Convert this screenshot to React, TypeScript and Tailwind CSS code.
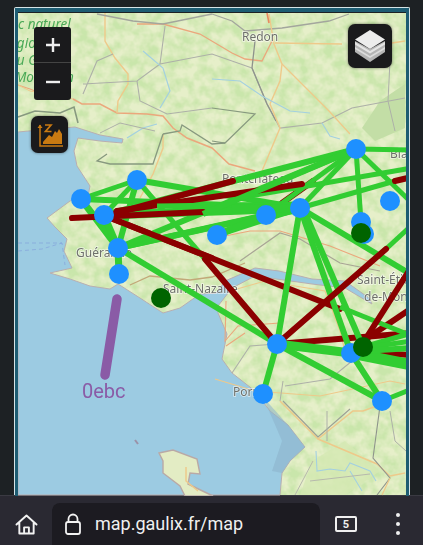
import React from 'react';

const ORANGE = '#eba77c';
const YELLOW = '#eec98a';
const GRAY = '#adb0a8';
const BORDER = '#87997f';
const RIVER = '#a3d0e0';

const roads: [string, string, number][] = [
  ['M73 98 L82 103 L100 103 L117 112 L147 113 L163 115 L173 127 L187 137 L212 147 L229 163 L255 170', ORANGE, 1.5],
  ['M105 12 L105 40 L115 57 L128 73 L128 83 L118 100 L117 112', YELLOW, 1.4],
  ['M18 84 L30 88 L40 92', ORANGE, 1.3],
  ['M18 84 L30 90 L73 98', YELLOW, 1],
  ['M137 23 L163 23 L200 33 L232 52 L245 58 L262 60 L272 40', ORANGE, 1.3],
  ['M163 133 L163 147 L153 173 L140 197', YELLOW, 1.4],
  ['M97 13 L133 20 L163 23 L212 13', '#a3a69d', 1.3],
  ['M212 13 L232 20 L245 30 L282 27 L329 20 L349 13', '#a3a69d', 1.3],
  ['M83 93 L97 60 L113 53 M83 83 L137 80 L160 63 L212 53 L252 67', GRAY, 1.1],
  ['M137 80 L140 100 L167 113 L212 107 M160 63 L165 25', GRAY, 1.1],
  ['M252 67 L267 103 L280 127 L322 122 L352 107 L405 97', GRAY, 1.2],
  ['M255 40 L252 67 L267 103 L276 120', '#8e938c', 1.3],
  ['M269 13 L274 43 L282 63 L280 80 L270 103 L280 127 L262 170', YELLOW, 1.4],
  ['M282 63 L329 110 L350 133', YELLOW, 1.3],
  ['M275 42 L342 43 M392 42 L405 40', YELLOW, 1.3],
  ['M267 12 L269 22', '#e8895f', 1.6],
  ['M143 50 L163 67 L170 90 L160 107', RIVER, 1.2],
  ['M212 78 L240 80 L262 95 L290 110 L310 112 M322 122 L330 135 L340 138', RIVER, 1.1],
  ['M127 137 L143 127 L157 123', RIVER, 1.3],
  ['M163 133 L180 130 L182 124 L212 143 L225 142', BORDER, 1.3],
  ['M107 153 L97 160 L110 163 L153 163 L163 133', BORDER, 1.3],
  ['M212 107 L255 113 L225 142 L212 140', BORDER, 1.2],
  ['M100 132 L120 122 L155 130', GRAY, 1],
  ['M130 284 L150 275 L190 279 L212 276 L245 262', '#c2a878', 1.3],
  ['M240 260 L280 232 L300 238 L340 262 L380 270', '#a8a595', 1.2],
  ['M225 235 L250 230 L280 230 L330 245 L380 265', ORANGE, 1.2],
  ['M226 300 L225 340 L238 325 L280 322 M226 345 L245 332', ORANGE, 1.1],
  ['M230 290 L265 280 L325 290 L340 330 L345 350', YELLOW, 1.2],
  ['M232 372 L250 345 L276 343 M285 385 L330 378 L352 360', GRAY, 1.1],
  ['M215 378 L255 390 L320 395 L390 380 L405 383', YELLOW, 1.2],
  ['M280 400 L318 438 L353 410 L363 410 L382 403', YELLOW, 1.5],
  ['M283 400 L318 436 L350 408', '#9b9f96', 1.1],
  ['M280 400 L283 380 M327 410 L327 440', GRAY, 1],
  ['M318 438 L377 463 L390 475 L405 472', YELLOW, 1.5],
  ['M380 405 L373 457 L390 477 L377 494', '#8e938c', 1.1],
  ['M390 477 L382 494', YELLOW, 1.3],
  ['M316 450 L317 470 L330 468 L345 470 L350 462 L370 470 L376 480 M350 470 L362 490', RIVER, 1.1],
  ['M295 494 L313 460 M310 480 L370 473', '#b6b8ac', 1],
  ['M390 410 L395 440 L406 450 M390 60 L388 100 L395 130', GRAY, 1],
];

type Seg = [number, number, number, number, number];

const greenLines: Seg[] = [
  [137, 179, 81, 198, 5], [137, 179, 104, 214, 5], [137, 179, 118, 247, 6],
  [137, 179, 205, 258, 5], [137, 179, 300, 207, 6],
  [81, 198, 300, 207, 6], [81, 198, 118, 247, 7], [104, 214, 118, 247, 7],
  [104, 214, 300, 207, 9], [104, 214, 356, 148, 6],
  [118, 247, 119, 273, 7], [118, 247, 266, 214, 6], [118, 247, 300, 207, 6], [118, 247, 356, 148, 6],
  [118, 247, 277, 343, 6], [217, 234, 300, 207, 6], [217, 234, 266, 214, 7],
  [266, 214, 300, 207, 9], [266, 214, 356, 148, 5], [300, 207, 356, 148, 5],
  [356, 148, 361, 221, 5], [356, 148, 412, 149, 5], [356, 148, 412, 202, 5],
  [300, 207, 395, 180, 5], [232, 198, 412, 167, 5],
  [300, 207, 277, 343, 6], [300, 207, 351, 352, 6], [303, 207, 363, 346, 6],
  [300, 207, 412, 274, 6], [386, 248, 412, 224, 5],
  [277, 343, 263, 393, 6], [277, 343, 351, 352, 9], [277, 343, 382, 400, 6],
  [340, 306, 412, 335, 5], [351, 352, 412, 364, 11], [351, 352, 382, 400, 6],
  [363, 346, 412, 332, 5], [363, 347, 412, 340, 5], [363, 350, 412, 347, 6],
  [382, 400, 412, 388, 5],
];

const greenTop: Seg[] = [
  [157, 205, 300, 203, 5], [203, 213, 356, 148, 6], [232, 208, 300, 207, 8],
];

const redUnder: [number, number, number, number][] = [
  [282, 202, 313, 180], [113, 218, 340, 308],
  [373, 352, 412, 354], [277, 343, 412, 332], [363, 340, 412, 307],
];

const redOver: [number, number, number, number][] = [
  [117, 210, 302, 183], [113, 213, 233, 180],
  [72, 217, 203, 211], [205, 258, 277, 343], [277, 343, 386, 248],
  [113, 218, 212, 257], [363, 342, 412, 265], [395, 180, 412, 176],
];

const blueNodes: [number, number][] = [
  [137, 179], [81, 198], [104, 214], [118, 247], [119, 273], [217, 234], [266, 214],
  [300, 207], [356, 148], [390, 200], [361, 221], [364, 233], [277, 343], [351, 352],
  [263, 393], [382, 400],
];

const darkNodes: [number, number][] = [[161, 297], [361, 232], [363, 346]];

const labels: [string, number, number][] = [
  ['Redon', 242, 40], ['Pontchâteau', 222, 182], ['Guérande', 76, 256], ['Saint-Nazaire', 163, 292],
  ['Saint-Étienne-', 357, 283], ['de-Montluc', 364, 300], ['Pornic', 233, 395], ['Blain', 390, 157],
];

const SEA =
  'M18 131 L50 128 L75 126 L100 134 L123 138 L122 142 L100 140 L78 137 L74 150 L77 165 L90 185 L88 195 L70 200 L47 217 L55 226 L67 238 L64 250 L72 267 L50 272 L70 278 L90 285 L110 288 L118 283 L140 297 L163 312 L180 307 L200 293 L216 292 L225 280 L255 267 L279 270 L312 278 L345 280 L369 297 L372 303 L345 287 L312 283 L255 275 L232 287 L218 305 L218 312 L227 333 L222 358 L232 372 L255 390 L270 410 L288 424 L305 446 L290 460 L282 472 L280 494 L18 494 Z';
const ISLAND =
  'M159 452 L173 449 L197 458 L200 473 L190 472 L188 483 L213 495 L185 495 L180 485 L163 472 L163 460 Z';

function MapCanvas() {
  return (
    <svg viewBox="18 12 388 482" className="block h-full w-full" style={{ fontFamily: '"Noto Sans", sans-serif' }}>
      <defs>
        <filter id="soft"><feGaussianBlur stdDeviation="0.5" /></filter>
        <filter id="mottle" x="0" y="0" width="100%" height="100%" colorInterpolationFilters="sRGB">
          <feTurbulence type="fractalNoise" baseFrequency="0.09" numOctaves="3" seed="7" />
          <feColorMatrix values="0 0 0 0 0.79  0 0 0 0 0.90  0 0 0 0 0.67  2.4 0 0 0 -0.75" />
        </filter>
      </defs>
      <rect x="18" y="12" width="388" height="482" fill="#e6efc9" />
      <rect x="18" y="12" width="388" height="482" filter="url(#mottle)" />
      <g filter="url(#soft)">
        <path d="M362 127 L380 100 L405 83 L405 127 L375 140 Z" fill="#c3dea6" />
        <path d="M312 460 L345 440 L380 470 L345 494 L300 494 Z" fill="#d5e8b3" opacity="0.8" />
        <path d={SEA} fill="#9ccbe2" stroke="#b8aeb0" strokeWidth="1" />
        <path d="M263 396 L288 424 L305 446 L290 460 L282 472 L272 470 L282 440 Z" fill="#8db3cb" opacity="0.55" />
        <path d={ISLAND} fill="#e3ecc4" stroke="#b9a9a6" strokeWidth="1.4" />
        <path d="M186 466 L186 480 L198 490" fill="none" stroke={YELLOW} strokeWidth="1.5" />
        <path d="M135 439 L138 443" stroke="#9a92a8" strokeWidth="2" />
        <path d="M18 242 L62 242 L65 264 M18 250 L42 248 L62 242" fill="none" stroke="#86a7dc" strokeWidth="0.8" strokeDasharray="4 3" />
        <path d="M18 116 L35 110 L60 112 L74 106 L78 122" fill="none" stroke={BORDER} strokeWidth="1.6" />
        {roads.map(([d, color, w], i) => (
          <path key={i} d={d} fill="none" stroke={color} strokeWidth={w} />
        ))}
        {labels.map(([t, x, y]) => (
          <text key={t} x={x} y={y} fontSize="12" fill="#6e706a" stroke="#ffffffa0" strokeWidth="1.6" paintOrder="stroke">{t}</text>
        ))}
        <g fontSize="13.5" fontStyle="italic" fill="#4aa957">
          <text x="18" y="28">c naturel</text>
          <text x="5" y="47">régional</text>
          <text x="9" y="64">du Golfe</text>
          <text x="15" y="81">Morbihan</text>
        </g>
      </g>
      {redUnder.map(([x1, y1, x2, y2], i) => (
        <line key={i} x1={x1} y1={y1} x2={x2} y2={y2} stroke="#8b0000" strokeWidth="6" strokeLinecap="round" />
      ))}
      {greenLines.map(([x1, y1, x2, y2, w], i) => (
        <line key={i} x1={x1} y1={y1} x2={x2} y2={y2} stroke="#32cd32" strokeWidth={w} />
      ))}
      {redOver.map(([x1, y1, x2, y2], i) => (
        <line key={i} x1={x1} y1={y1} x2={x2} y2={y2} stroke="#8b0000" strokeWidth="6" strokeLinecap="round" />
      ))}
      {greenTop.map(([x1, y1, x2, y2, w], i) => (
        <line key={i} x1={x1} y1={y1} x2={x2} y2={y2} stroke="#32cd32" strokeWidth={w} />
      ))}
      <line x1="117" y1="298" x2="105" y2="374" stroke="#8a5ba6" strokeWidth="9.5" strokeLinecap="round" />
      <text x="82" y="397" fontSize="20" fill="#8a5ba6" style={{ fontFamily: 'Roboto, sans-serif' }}>0ebc</text>
      {blueNodes.map(([x, y], i) => (
        <circle key={i} cx={x} cy={y} r="10" fill="#1e90ff" />
      ))}
      {darkNodes.map(([x, y], i) => (
        <circle key={i} cx={x} cy={y} r="10" fill="#006400" />
      ))}
    </svg>
  );
}

function ElevationIcon() {
  return (
    <svg viewBox="0 0 26 26" className="h-[26px] w-[26px]">
      <path d="M3 3 V24 H26" fill="none" stroke="#c97a12" strokeWidth="1.5" />
      <path d="M0.5 6 L3 2.5 L5.5 6 Z" fill="#c97a12" />
      <path d="M6 22 V20 L12 13 L15 15 L18 9 L20 11 L22 7 L25 12 V22 Z" fill="#c97a12" />
      <path d="M8 3 H14 L8.5 9.5 H14.5" fill="none" stroke="#c97a12" strokeWidth="1.7" />
    </svg>
  );
}

function LayersIcon() {
  return (
    <svg viewBox="0 0 32 34" className="h-[34px] w-[32px]">
      <path d="M16 20 L31 12 V23 L16 33 L1 23 V12 Z" fill="#b5b5b5" />
      <path d="M1 18 L16 27 L31 18 V20 L16 29 L1 20 Z" fill="#dcdcdc" />
      <path d="M1 13 L16 22 L31 13 V15.5 L16 24.5 L1 15.5 Z" fill="#e4e4e4" />
      <path d="M16 1 L31 10.5 L16 20 L1 10.5 Z" fill="#ececec" />
    </svg>
  );
}

export default function App() {
  return (
    <div className="flex h-[545px] w-[423px] flex-col overflow-hidden bg-[#1d2124]" style={{ fontFamily: 'Roboto, sans-serif' }}>
      <div className="flex-1 min-h-0 pl-[14px] pr-[13px] pt-[7px]">
        <div className="h-full rounded-t-[2px] border-x border-t border-[#d5e3e6]">
          <div className="relative h-[488px] border-x-[3px] border-t-4 border-[#1d5c72]">
            <MapCanvas />
            <div className="absolute left-[16px] top-[15px] flex h-[73px] w-[37px] flex-col rounded-[3px] bg-[#1a1a1c] text-white">
              <div className="flex h-[36px] items-center justify-center border-b border-[#444]">
                <svg viewBox="0 0 14 14" className="h-[14px] w-[14px]"><path d="M7 0 V14 M0 7 H14" stroke="#eee" strokeWidth="2.4" /></svg>
              </div>
              <div className="flex flex-1 items-center justify-center">
                <svg viewBox="0 0 14 14" className="h-[14px] w-[14px]"><path d="M0 7 H14" stroke="#eee" strokeWidth="2.4" /></svg>
              </div>
            </div>
            <div className="absolute left-[13px] top-[104px] flex h-[37px] w-[37px] items-center justify-center rounded-[7px] bg-[#1a1a1c] shadow-[0_0_3px_rgba(0,0,0,0.5)]">
              <ElevationIcon />
            </div>
            <div className="absolute right-[14px] top-[12px] flex h-[44px] w-[44px] items-center justify-center rounded-[7px] bg-[#1a1a1c] shadow-[0_0_3px_rgba(0,0,0,0.5)]">
              <LayersIcon />
            </div>
          </div>
        </div>
      </div>
      <div className="flex h-[50px] shrink-0 items-end border-t border-[#3a3a42] bg-[#2a2932] text-white">
        <div className="flex h-[42px] w-[52px] items-center justify-center">
          <svg viewBox="0 0 24 22" className="h-[21px] w-[23px]" fill="none" stroke="#f2f2f2" strokeWidth="2" strokeLinejoin="round" strokeLinecap="round">
            <path d="M1.5 11 L12 1.5 L22.5 11 M4.5 9 V20.5 H19.5 V9 M9.5 20.5 V14 H14.5 V20.5" />
          </svg>
        </div>
        <div className="flex h-[42px] w-[268px] items-center rounded-t-[8px] bg-[#1c1b21] pl-[13px]">
          <svg viewBox="0 0 16 22" className="h-[22px] w-[16px]" fill="none" stroke="#f2f2f2" strokeWidth="1.8">
            <path d="M3.5 9 V6 A4.5 4.5 0 0 1 12.5 6 V9" />
            <rect x="1" y="9" width="14" height="12" rx="2" />
          </svg>
          <span className="ml-[14px] text-[18px] leading-none text-[#f0f0f0]">map.gaulix.fr/map</span>
        </div>
        <div className="flex h-[42px] w-[52px] items-center justify-center">
          <div className="flex h-[16px] w-[22px] items-center justify-center rounded-[2px] border-2 border-[#f0f0f0] text-[11px] font-bold leading-none text-[#f0f0f0]">5</div>
        </div>
        <div className="flex h-[42px] flex-1 flex-col items-center justify-center gap-[5px]">
          <span className="h-[4px] w-[4px] rounded-full bg-[#f0f0f0]" />
          <span className="h-[4px] w-[4px] rounded-full bg-[#f0f0f0]" />
          <span className="h-[4px] w-[4px] rounded-full bg-[#f0f0f0]" />
        </div>
      </div>
    </div>
  );
}
